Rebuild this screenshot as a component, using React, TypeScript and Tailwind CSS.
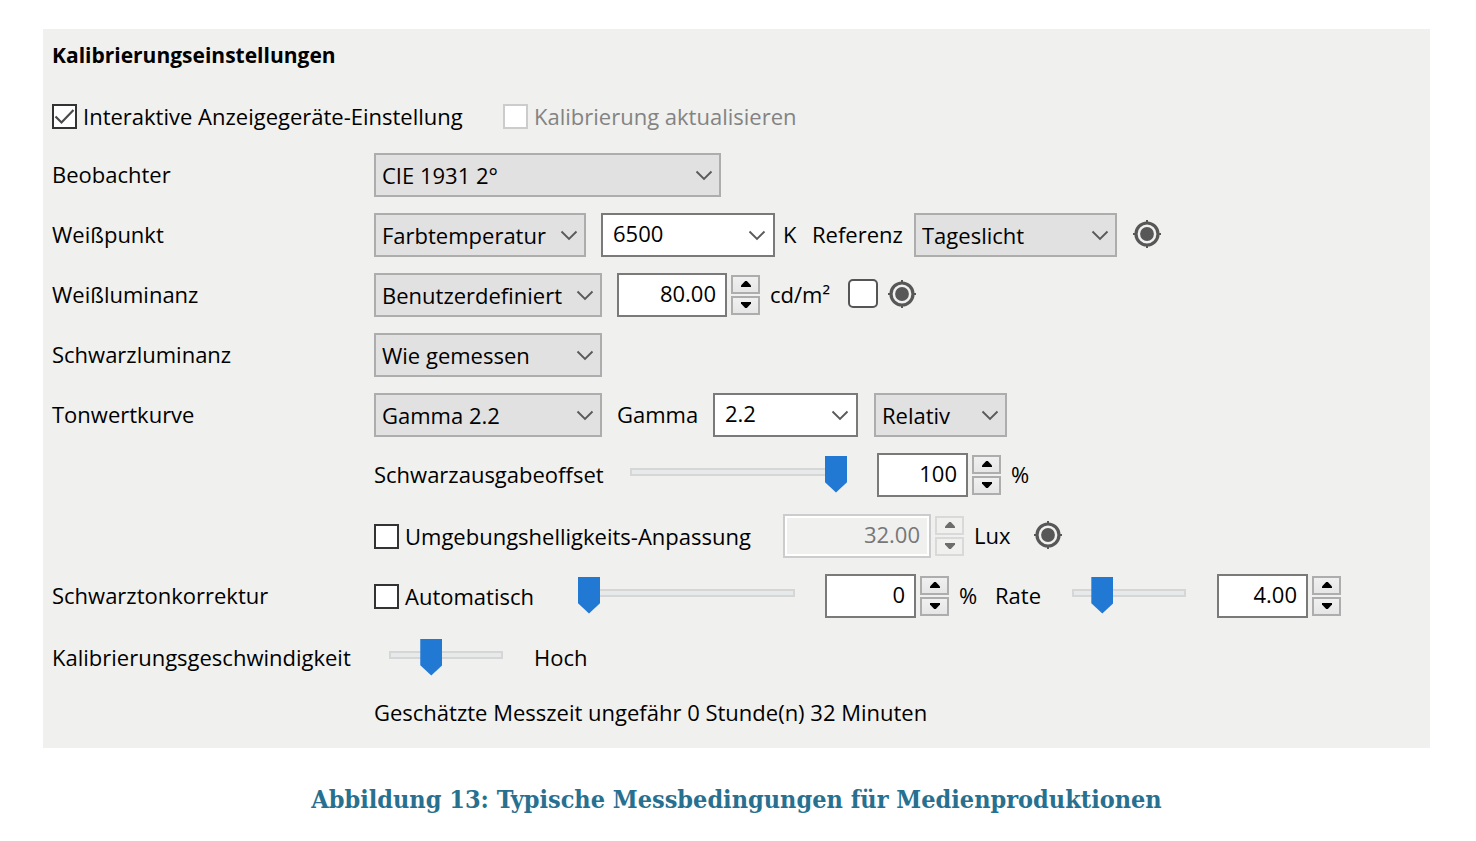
import { useState } from "react";
import type { ReactNode } from "react";
import clsx from "clsx";

function Chevron({ className }: { className?: string }) {
  return (
    <svg
      viewBox="0 0 18 12"
      className={clsx("pointer-events-none h-3 w-[18px]", className)}
      fill="none"
      stroke="#5a5a5a"
      strokeWidth="1.9"
      aria-hidden="true"
    >
      <path d="M1.5 2.5 9 10l7.5-7.5" />
    </svg>
  );
}

function Dropdown({ id, label, value, width }: { id: string; label: string; value: string; width: string }) {
  return (
    <div className={clsx("relative h-11 shrink-0", width)}>
      <select
        id={id}
        aria-label={label}
        defaultValue={value}
        className="h-full w-full appearance-none border-2 border-[#adadad] bg-[#e1e1e1] pl-1.5 pr-8"
      >
        <option>{value}</option>
      </select>
      <Chevron className="absolute right-2 top-4" />
    </div>
  );
}

function ComboBox({ id, label, value, width }: { id: string; label: string; value: string; width: string }) {
  return (
    <div className={clsx("flex h-11 shrink-0 items-center border-2 border-[#7a7a7a] bg-white", width)}>
      <input
        id={id}
        aria-label={label}
        defaultValue={value}
        className="h-full min-w-0 flex-1 bg-transparent pb-1 pl-2.5 outline-none"
      />
      <button type="button" aria-label={`${label} auswählen`} className="flex h-full w-8 items-center justify-center">
        <Chevron />
      </button>
    </div>
  );
}

function SpinButton({ up, disabled, label }: { up?: boolean; disabled?: boolean; label: string }) {
  return (
    <button
      type="button"
      aria-label={label}
      disabled={disabled}
      className={clsx(
        "flex h-[19px] w-[29px] items-center justify-center border-2",
        disabled ? "border-[#d9d9d9] bg-[#f0f0ef]" : "border-[#adadad] bg-linear-to-b from-[#f0f0f0] to-[#e6e6e6]",
      )}
    >
      <svg viewBox="0 0 10 6" className="mb-0.5 h-1.5 w-2.5" fill={disabled ? "#6d6d6d" : "#000"} aria-hidden="true">
        {up ? <path d="M0 6V4.6L4.2 0h1.6L10 4.6V6Z" /> : <path d="M0 0v1.4L4.2 6h1.6L10 1.4V0Z" />}
      </svg>
    </button>
  );
}

function NumberField({ id, label, value, width, disabled }: { id: string; label: string; value: string; width: string; disabled?: boolean }) {
  return (
    <div className="flex shrink-0 items-center gap-1">
      <input
        id={id}
        aria-label={label}
        defaultValue={value}
        disabled={disabled}
        className={clsx(
          "h-11 border-2 pb-1 pr-[9px] text-right outline-none",
          width,
          disabled
            ? "border-[#cccccc] bg-[#f0f0ef] text-[#777777] inset-ring-2 inset-ring-white"
            : "border-[#7a7a7a] bg-white",
        )}
      />
      <div className="flex flex-col gap-0.5">
        <SpinButton up disabled={disabled} label={`${label} erhöhen`} />
        <SpinButton disabled={disabled} label={`${label} verringern`} />
      </div>
    </div>
  );
}

function Slider({ id, label, value, max, width }: { id: string; label: string; value: number; max: number; width: string }) {
  return (
    <input
      id={id}
      type="range"
      aria-label={label}
      min={0}
      max={max}
      defaultValue={value}
      className={clsx(
        "h-[37px] shrink-0 appearance-none bg-transparent pb-[7px]",
        "[&::-webkit-slider-runnable-track]:h-2 [&::-webkit-slider-runnable-track]:bg-[#e7eaea] [&::-webkit-slider-runnable-track]:shadow-[inset_0_0_0_2px_#d6d6d6]",
        "[&::-webkit-slider-thumb]:-mt-3 [&::-webkit-slider-thumb]:h-[37px] [&::-webkit-slider-thumb]:w-[22px] [&::-webkit-slider-thumb]:appearance-none [&::-webkit-slider-thumb]:bg-[#2179d3] [&::-webkit-slider-thumb]:[clip-path:polygon(0_0,100%_0,100%_72%,50%_100%,0_72%)]",
        width,
      )}
    />
  );
}

function CheckOption({ id, children, checked, disabled }: { id: string; children: ReactNode; checked?: boolean; disabled?: boolean }) {
  const [on, setOn] = useState(Boolean(checked));
  return (
    <div className="flex shrink-0 items-center gap-1.5">
      <span className="relative flex">
        <input
          id={id}
          type="checkbox"
          checked={on}
          disabled={disabled}
          onChange={(e) => setOn(e.target.checked)}
          className="size-[25px] appearance-none border-2 border-[#333333] bg-white disabled:border-[#cccccc]"
        />
        {on && (
          <svg
            viewBox="0 0 25 25"
            className="pointer-events-none absolute inset-0 size-[25px]"
            fill="none"
            stroke="#4a4a4a"
            strokeWidth="2.2"
            aria-hidden="true"
          >
            <path d="M3.5 12.5 9.5 18.5 21.5 6" />
          </svg>
        )}
      </span>
      <label htmlFor={id} className={clsx("whitespace-nowrap", disabled && "text-[#838383]")}>
        {children}
      </label>
    </div>
  );
}

function MeasureButton({ label }: { label: string }) {
  return (
    <button type="button" aria-label={label} className="shrink-0 pb-[3px]">
      <svg viewBox="0 0 28 28" className="block size-7" fill="none" stroke="#575757" aria-hidden="true">
        <circle cx="14" cy="14" r="11" strokeWidth="3.2" />
        <circle cx="14" cy="14" r="6.9" fill="#575757" stroke="none" />
        <path d="M14 0v4M14 24v4M0 14h4M24 14h4" strokeWidth="2" />
      </svg>
    </button>
  );
}

function Text({ children, width, htmlFor }: { children: ReactNode; width?: string; htmlFor?: string }) {
  const style = clsx("block shrink-0 whitespace-nowrap pb-0.5", width);
  return htmlFor ? (
    <label htmlFor={htmlFor} className={style}>
      {children}
    </label>
  ) : (
    <span className={style}>{children}</span>
  );
}

function Row({ label, htmlFor, className, children }: { label?: string; htmlFor?: string; className: string; children: ReactNode }) {
  return (
    <div className={clsx("flex h-11 items-center", className)}>
      <div className="w-[322px] shrink-0">{label && <Text htmlFor={htmlFor}>{label}</Text>}</div>
      <div className="flex items-center">{children}</div>
    </div>
  );
}

export default function App() {
  return (
    <main className="min-h-screen bg-white pl-[43px] pr-[46px] pt-[29px] font-['Open_Sans','Noto_Sans',sans-serif] text-[22px] leading-7 text-black">
      <form className="bg-[#f0f0ee] pb-[22px] pl-[9px] pt-3">
        <h1 className="text-[21px] font-bold">Kalibrierungseinstellungen</h1>

        <div className="mt-[33px] flex items-center">
          <div className="w-[451px]">
            <CheckOption id="interactive" checked>
              Interaktive Anzeigegeräte-Einstellung
            </CheckOption>
          </div>
          <CheckOption id="update" disabled>
            Kalibrierung aktualisieren
          </CheckOption>
        </div>

        <Row label="Beobachter" htmlFor="observer" className="mt-[23px]">
          <Dropdown id="observer" label="Beobachter" value="CIE 1931 2°" width="w-[347px]" />
        </Row>

        <Row label="Weißpunkt" htmlFor="whitepoint" className="mt-4">
          <Dropdown id="whitepoint" label="Weißpunkt" value="Farbtemperatur" width="w-[212px]" />
          <div className="ml-[15px] flex items-center gap-2">
            <ComboBox id="kelvin" label="Farbtemperatur in Kelvin" value="6500" width="w-[174px]" />
            <Text width="w-[29px]" htmlFor="kelvin">
              K
            </Text>
          </div>
          <Text width="w-[102px]" htmlFor="reference">
            Referenz
          </Text>
          <Dropdown id="reference" label="Referenz" value="Tageslicht" width="w-[203px]" />
          <div className="ml-4 flex">
            <MeasureButton label="Weißpunkt messen" />
          </div>
        </Row>

        <Row label="Weißluminanz" htmlFor="white-mode" className="mt-4">
          <Dropdown id="white-mode" label="Weißluminanz" value="Benutzerdefiniert" width="w-[228px]" />
          <div className="ml-[15px] flex items-center gap-2.5">
            <NumberField id="luminance" label="Luminanz" value="80.00" width="w-[110px]" />
            <Text width="w-[68px]" htmlFor="luminance">
              cd/m²
            </Text>
            <input
              type="checkbox"
              aria-label="Weißluminanz anpassen"
              className="mb-1 h-[29px] w-[30px] appearance-none rounded-[5px] border-2 border-[#555555] bg-white"
            />
            <MeasureButton label="Weißluminanz messen" />
          </div>
        </Row>

        <Row label="Schwarzluminanz" htmlFor="black-mode" className="mt-4">
          <Dropdown id="black-mode" label="Schwarzluminanz" value="Wie gemessen" width="w-[228px]" />
        </Row>

        <Row label="Tonwertkurve" htmlFor="tone-curve" className="mt-4">
          <Dropdown id="tone-curve" label="Tonwertkurve" value="Gamma 2.2" width="w-[228px]" />
          <div className="ml-[15px] flex items-center">
            <Text width="w-24" htmlFor="gamma">
              Gamma
            </Text>
            <ComboBox id="gamma" label="Gamma" value="2.2" width="w-[145px]" />
          </div>
          <div className="ml-4">
            <Dropdown id="gamma-type" label="Gammatyp" value="Relativ" width="w-[133px]" />
          </div>
        </Row>

        <Row className="mt-4">
          <Text width="w-64" htmlFor="offset">
            Schwarzausgabeoffset
          </Text>
          <Slider id="offset" label="Schwarzausgabeoffset" value={100} max={100} width="w-[217px]" />
          <div className="ml-[30px] flex items-center gap-2.5">
            <NumberField id="offset-value" label="Offset" value="100" width="w-[91px]" />
            <Text htmlFor="offset-value">%</Text>
          </div>
        </Row>

        <Row className="mt-[17px]">
          <div className="w-[409px] shrink-0">
            <CheckOption id="ambient">Umgebungshelligkeits-Anpassung</CheckOption>
          </div>
          <div className="flex items-center gap-2.5">
            <NumberField id="lux" label="Umgebungshelligkeit" value="32.00" width="w-[148px]" disabled />
            <Text width="w-[50px]" htmlFor="lux">
              Lux
            </Text>
            <MeasureButton label="Umgebungshelligkeit messen" />
          </div>
        </Row>

        <Row label="Schwarztonkorrektur" htmlFor="correction" className="mt-4">
          <div className="w-[204px] shrink-0">
            <CheckOption id="automatic">Automatisch</CheckOption>
          </div>
          <Slider id="correction" label="Schwarztonkorrektur" value={0} max={100} width="w-[217px]" />
          <div className="ml-[30px] flex items-center gap-2.5">
            <NumberField id="correction-value" label="Korrektur" value="0" width="w-[91px]" />
            <Text width="w-[26px]" htmlFor="correction-value">
              %
            </Text>
            <Text width="w-[67px]" htmlFor="rate">
              Rate
            </Text>
          </div>
          <Slider id="rate" label="Rate" value={21} max={100} width="ml-[10px] w-[114px]" />
          <div className="ml-[31px] flex">
            <NumberField id="rate-value" label="Ratenwert" value="4.00" width="w-[91px]" />
          </div>
        </Row>

        <Row label="Kalibrierungsgeschwindigkeit" htmlFor="speed" className="mt-[18px]">
          <div className="ml-[15px] flex items-center gap-[31px]">
            <Slider id="speed" label="Kalibrierungsgeschwindigkeit" value={34} max={100} width="w-[114px]" />
            <Text>Hoch</Text>
          </div>
        </Row>

        <p className="ml-[322px] mt-[18px] whitespace-nowrap">Geschätzte Messzeit ungefähr 0 Stunde(n) 32 Minuten</p>
      </form>

      <p className="mt-[34px] text-center font-['DejaVu_Serif_Condensed','DejaVu_Serif',serif] text-[25px] font-bold leading-9 text-[#28708f]">
        Abbildung 13: Typische Messbedingungen für Medienproduktionen
      </p>
    </main>
  );
}
